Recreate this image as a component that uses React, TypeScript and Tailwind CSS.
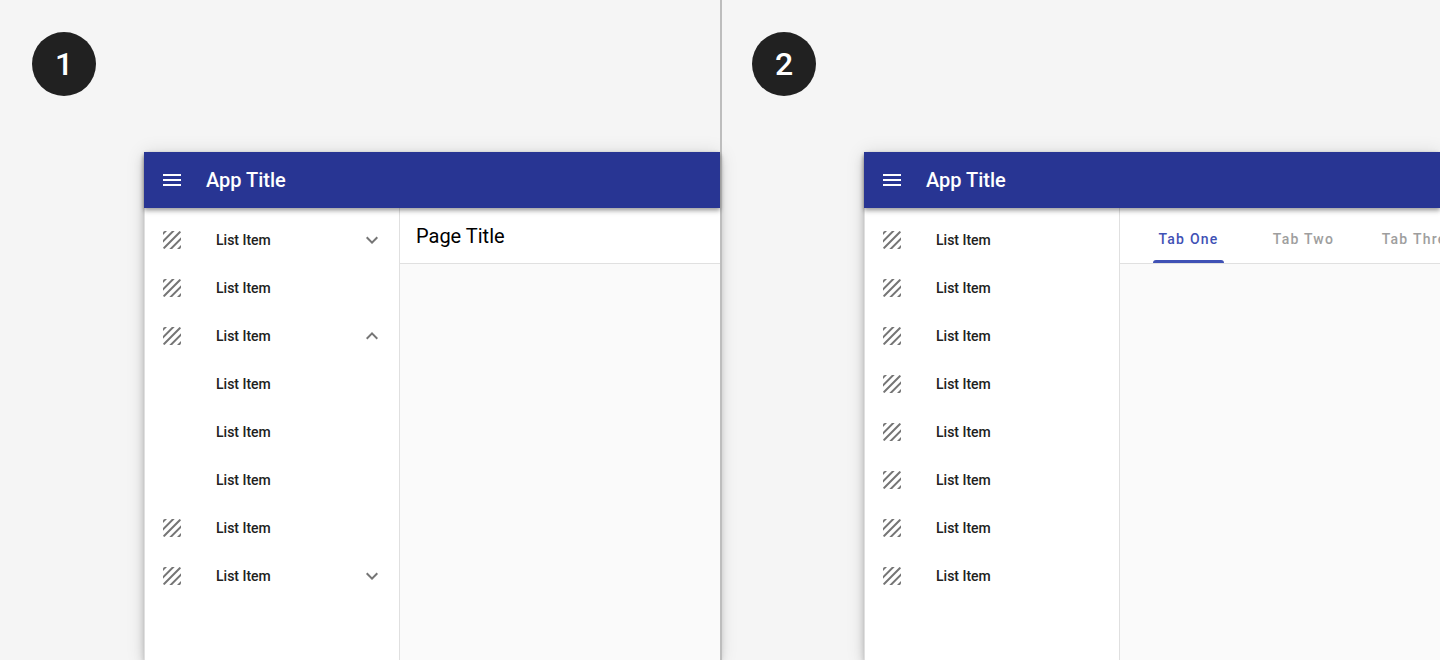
import { useState } from 'react';
import type { ReactNode } from 'react';
import clsx from 'clsx';
import { MdExpandLess, MdExpandMore, MdMenu, MdTexture } from 'react-icons/md';

interface NavEntry {
    label: string;
    children?: string[];
}

const nestedNav: NavEntry[] = [
    { label: 'List Item', children: ['List Item', 'List Item'] },
    { label: 'List Item' },
    { label: 'List Item', children: ['List Item', 'List Item', 'List Item'] },
    { label: 'List Item' },
    { label: 'List Item', children: ['List Item', 'List Item'] },
];

const flatNav: NavEntry[] = Array.from({ length: 8 }, () => ({ label: 'List Item' }));

const tabs = ['Tab One', 'Tab Two', 'Tab Three'];

function NavList({ items, initialOpen = -1 }: { items: NavEntry[]; initialOpen?: number }) {
    const [open, setOpen] = useState(initialOpen);

    return (
        <ul className="py-2 text-sm font-medium text-[#212121]">
            {items.map((item, i) => {
                const expanded = open === i;
                return (
                    <li key={i}>
                        <button
                            type="button"
                            aria-expanded={item.children ? expanded : undefined}
                            onClick={() => item.children && setOpen(expanded ? -1 : i)}
                            className="flex h-12 w-full items-center px-4 text-left"
                        >
                            <MdTexture className="size-6 text-[#757575]" />
                            <span className="ml-8 flex-1">{item.label}</span>
                            {item.children &&
                                (expanded ? (
                                    <MdExpandLess className="size-6 text-[#757575]" />
                                ) : (
                                    <MdExpandMore className="size-6 text-[#757575]" />
                                ))}
                        </button>
                        {item.children && expanded && (
                            <ul>
                                {item.children.map((child, j) => (
                                    <li key={j}>
                                        <button type="button" className="flex h-12 w-full items-center pl-18 text-left">
                                            {child}
                                        </button>
                                    </li>
                                ))}
                            </ul>
                        )}
                    </li>
                );
            })}
        </ul>
    );
}

function TabBar() {
    const [active, setActive] = useState(0);

    return (
        <div role="tablist" className="flex h-full pl-[11px]">
            {tabs.map((tab, i) => (
                <button
                    key={tab}
                    type="button"
                    role="tab"
                    aria-selected={active === i}
                    onClick={() => setActive(i)}
                    className={clsx(
                        'flex w-[115px] shrink-0 flex-col items-center text-sm font-medium tracking-[1.25px]',
                        active === i ? 'text-[#3f51b5]' : 'text-[#9e9e9e]'
                    )}
                >
                    <span className="flex flex-1 items-center pt-2.5 whitespace-nowrap">{tab}</span>
                    <span className={clsx('h-[3px] w-[71px] rounded-t-sm', active === i && 'bg-[#3f51b5]')} />
                </button>
            ))}
        </div>
    );
}

interface AppWindowProps {
    nav: ReactNode;
    toolbar: ReactNode;
}

function AppWindow({ nav, toolbar }: AppWindowProps) {
    return (
        <div className="mt-14 ml-28 flex flex-1 flex-col bg-[#fafafa] shadow-[0_3px_5px_-1px_rgba(0,0,0,0.2),0_6px_10px_rgba(0,0,0,0.14),0_1px_18px_rgba(0,0,0,0.12)]">
            <header className="z-10 flex h-14 items-center bg-[#283593] pl-4 text-white shadow-[0_2px_4px_rgba(0,0,0,0.3),0_4px_5px_rgba(0,0,0,0.12)]">
                <button type="button" aria-label="Menu">
                    <MdMenu className="size-6" />
                </button>
                <h2 className="ml-[22px] text-xl font-medium">App Title</h2>
            </header>
            <div className="flex flex-1">
                <nav className="w-64 shrink-0 border-x border-[#e0e0e0] bg-white">
                    <div className="-mx-px">{nav}</div>
                </nav>
                <main className="min-w-0 flex-1 overflow-hidden">
                    <div className="h-14 border-b border-[#e0e0e0] bg-white">{toolbar}</div>
                </main>
            </div>
        </div>
    );
}

function Panel({ step, children }: { step: number; children: ReactNode }) {
    return (
        <section className="flex min-w-0 flex-col pt-8 pl-8">
            <div className="flex size-16 items-center justify-center rounded-full bg-[#212121] text-[32px] font-medium text-white">
                {step}
            </div>
            {children}
        </section>
    );
}

export default function App() {
    return (
        <div className="relative grid min-h-screen grid-cols-2 overflow-hidden bg-[#f5f5f5] font-[Roboto,sans-serif]">
            <Panel step={1}>
                <AppWindow
                    nav={<NavList items={nestedNav} initialOpen={2} />}
                    toolbar={<h3 className="flex h-full items-center pl-4 text-xl text-black">Page Title</h3>}
                />
            </Panel>
            <Panel step={2}>
                <AppWindow nav={<NavList items={flatNav} />} toolbar={<TabBar />} />
            </Panel>
            {/* Divider between the two panels */}
            <div className="absolute inset-y-0 left-1/2 w-0.5 bg-[#bdbdbd]" />
        </div>
    );
}
